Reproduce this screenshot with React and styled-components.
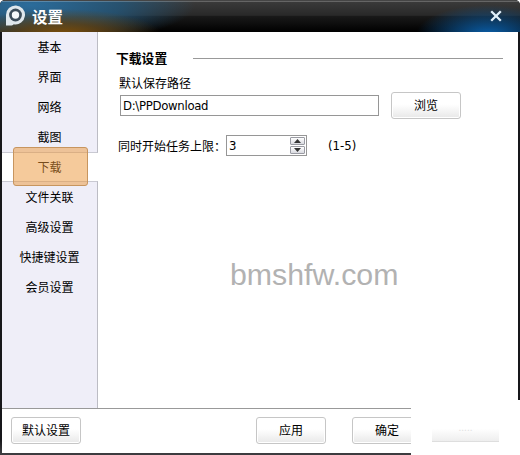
import React from 'react';
import styled, { createGlobalStyle } from 'styled-components';

const GlobalStyle = createGlobalStyle`
  * {
    box-sizing: border-box;
  }
  body {
    margin: 0;
    overflow: hidden;
    background: #fff;
  }
`;

const uiFont = '"DejaVu Sans Condensed", "DejaVu Sans", "Noto Sans CJK SC", sans-serif';

const Window = styled.div`
  position: relative;
  display: flex;
  flex-direction: column;
  width: 520px;
  height: 455px;
  border-radius: 5px 5px 0 0;
  overflow: hidden;
  background: linear-gradient(#17171a 440px, #3c3c3f 453px);
  color: #000;
  font: 12px/18px "Noto Sans CJK SC", sans-serif;
`;

const TitleBar = styled.header`
  display: flex;
  flex: none;
  align-items: center;
  height: 32px;
  padding: 0 18px 1px 5px;
  border-top: 1px solid #454545;
  background:
    linear-gradient(rgba(255, 255, 255, 0.22) 0 1px, transparent 1px),
    radial-gradient(ellipse 72px 30px at 488px 34px, #0b61ad, rgba(11, 85, 150, 0.6) 50%, transparent),
    radial-gradient(ellipse 100px 26px at 62px 34px, #805008, rgba(100, 64, 12, 0.75) 45%, transparent),
    radial-gradient(ellipse 165px 40px at 30px 4px, #2b6c9b, rgba(36, 88, 124, 0.8) 55%, transparent),
    linear-gradient(#3b3b3b, #292929 46%, #191919 50%, #000);
`;

const Title = styled.h1`
  flex: 1;
  margin: 0 0 0 6px;
  color: #fff;
  font-size: 15.5px;
  font-weight: 700;
  line-height: 28px;
`;

const Body = styled.div`
  display: flex;
  flex: 1;
  margin: 0 2px;
  background: #fff;
`;

const Sidebar = styled.nav`
  display: flex;
  flex-direction: column;
  flex: none;
  width: 96px;
`;

const TabGroup = styled.div`
  flex: ${props => (props.$fill ? 1 : 'none')};
  padding-top: ${props => props.$top}px;
  height: ${props => props.$height || 'auto'};
  border-right: 1px solid #bcbcc4;
  border-bottom: ${props => (props.$fill ? 0 : 1)}px solid #c9c9d2;
  border-top: ${props => (props.$fill ? 1 : 0)}px solid #c9c9d2;
  background: #efeef8;
`;

const Tab = styled.div`
  height: 30px;
  line-height: 30px;
  text-align: center;
`;

const ActiveTab = styled.div`
  position: relative;
  flex: none;
  height: 28px;
  padding-right: 1px;
  line-height: 28px;
  text-align: center;
`;

const Highlight = styled.div`
  position: absolute;
  top: -6px;
  left: 11px;
  width: 75px;
  height: 39px;
  border: 1px solid #c7955f;
  border-radius: 3px;
  background: rgba(236, 150, 56, 0.5);
`;

const Panel = styled.main`
  flex: 1;
  padding: 16px 15px 0 18px;
`;

const Heading = styled.h2`
  display: flex;
  align-items: center;
  gap: 26px;
  height: 20px;
  margin: 0;
  font-size: 12.8px;
  font-weight: 700;

  &::after {
    content: '';
    flex: 1;
    height: 1px;
    background: #999;
  }
`;

const Label = styled.div`
  height: 18px;
  margin: 6px 0 0 3px;
`;

const Row = styled.div`
  display: flex;
  align-items: center;
`;

const PathRow = styled(Row)`
  gap: 12px;
  height: 27px;
  margin: 0 0 0 4px;
`;

const Field = styled.div`
  display: flex;
  align-items: center;
  justify-content: space-between;
  width: ${props => props.$width}px;
  height: 21px;
  padding: 0 1px 0 2px;
  border: 1px solid #969696;
  background: #fff;
  font-family: ${uiFont};
  font-size: 13px;
  letter-spacing: -0.3px;
`;

const LimitRow = styled(Row)`
  height: 21px;
  margin: 16px 0 0 2px;
`;

const LimitLabel = styled.span`
  width: 108px;
  white-space: nowrap;
`;

const Range = styled.span`
  margin-left: 21px;
  font-family: ${uiFont};
  font-size: 13px;
`;

const Spinner = styled.span`
  display: flex;
  flex-direction: column;
  gap: 1px;
`;

const SpinButton = styled.span`
  display: flex;
  align-items: center;
  justify-content: center;
  width: 15px;
  height: 8px;
  border: 1px solid #9a9ba3;
  border-radius: 1px;
  background: linear-gradient(#fff, #d9dae0);
`;

const Button = styled.button`
  width: 70px;
  height: 27px;
  padding: 0 0 1px;
  border: 1px solid #c6c6c6;
  border-radius: 3px;
  background: linear-gradient(#fff 45%, #e8e8e8);
  box-shadow: inset 0 0 0 1px #fff;
  color: #000;
  font: inherit;
`;

const Footer = styled.footer`
  display: flex;
  flex: none;
  align-items: flex-start;
  height: 45px;
  margin: 0 2px 2px;
  padding: 8px 18px 0 9px;
  border-top: 1px solid #999;
  background: #fff;
`;

const Actions = styled.div`
  display: flex;
  gap: 26px;
  margin-left: 175px;
`;

const Watermark = styled.div`
  position: absolute;
  top: 257px;
  left: 230px;
  color: #b2b2b2;
  font: 30.3px/36px "Liberation Sans", Arial, sans-serif;
`;

// Pale patch laid over the window's bottom right corner
const Patch = styled.div`
  position: absolute;
  top: 400px;
  right: 0;
  width: 109px;
  height: 55px;
  background: #fff;
`;

const FadedButton = styled.div`
  width: 67px;
  height: 26px;
  margin: 16px 0 0 21px;
  border-bottom: 1px solid #dedede;
  background: linear-gradient(#fff 50%, #eee);
  color: #e2e2e2;
  font-size: 10px;
  line-height: 22px;
  text-align: center;
`;

const Logo = () => (
  <svg width="21" height="22" viewBox="0 0 21 22">
    <path
      d="M1 20.5V10A9.5 9.5 0 1 1 8.8 19.3C8 20.3 7 20.5 5.5 20.5z"
      fill="#dfe7ec"
    />
    <circle cx="10.5" cy="10" r="6.4" fill="#3b4c59" />
    <circle cx="10.5" cy="10" r="3.7" fill="#f5f8fa" />
  </svg>
);

const CloseIcon = () => (
  <svg width="12" height="12" viewBox="0 0 12 12" stroke="#e1f0fb" strokeWidth="2.3">
    <path d="M1.2 1.2l9.6 9.6M10.8 1.2l-9.6 9.6" />
  </svg>
);

const Arrow = ({ down }) => (
  <svg width="7" height="4" viewBox="0 0 7 4" fill="#333">
    <path d={down ? 'M0 0h7L3.5 4z' : 'M0 4h7L3.5 0z'} />
  </svg>
);

const tabsBefore = ['基本', '界面', '网络', '截图'];
const tabsAfter = ['文件关联', '高级设置', '快捷键设置', '会员设置'];

export default function App() {
  return (
    <>
      <GlobalStyle />
      <Window>
        <TitleBar>
          <Logo />
          <Title>设置</Title>
          <CloseIcon />
        </TitleBar>
        <Body>
          <Sidebar>
            <TabGroup $top={0} $height="121px">
              {tabsBefore.map(tab => <Tab key={tab}>{tab}</Tab>)}
            </TabGroup>
            <ActiveTab>
              下载
              <Highlight />
            </ActiveTab>
            <TabGroup $top={0} $fill>
              {tabsAfter.map(tab => <Tab key={tab}>{tab}</Tab>)}
            </TabGroup>
          </Sidebar>
          <Panel>
            <Heading>下载设置</Heading>
            <Label>默认保存路径</Label>
            <PathRow>
              <Field $width={259}>D:\PPDownload</Field>
              <Button>浏览</Button>
            </PathRow>
            <LimitRow>
              <LimitLabel>同时开始任务上限：</LimitLabel>
              <Field $width={81}>
                3
                <Spinner>
                  <SpinButton><Arrow /></SpinButton>
                  <SpinButton><Arrow down /></SpinButton>
                </Spinner>
              </Field>
              <Range>(1-5)</Range>
            </LimitRow>
          </Panel>
        </Body>
        <Footer>
          <Button>默认设置</Button>
          <Actions>
            <Button>应用</Button>
            <Button>确定</Button>
          </Actions>
        </Footer>
        <Watermark>bmshfw.com</Watermark>
        <Patch>
          <FadedButton>.....</FadedButton>
        </Patch>
      </Window>
    </>
  );
}
